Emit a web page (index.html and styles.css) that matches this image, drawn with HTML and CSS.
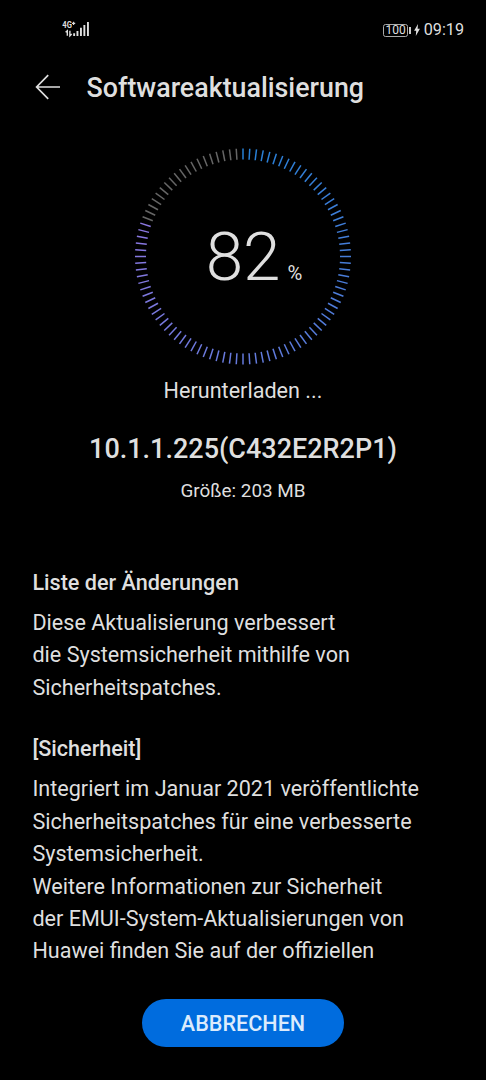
FILE: index.html
```html
<!DOCTYPE html>
<html lang="de">
<head>
<meta charset="utf-8">
<title>Softwareaktualisierung</title>
<link rel="stylesheet" href="styles.css">
</head>
<body>
<div class="screen">
  <header class="status">
    <svg class="signal" width="28" height="18" viewBox="0 0 28 18">
      <text class="network" x="0.3" y="8.4" textLength="9.6" lengthAdjust="spacingAndGlyphs">4G</text>
      <path class="plus" d="M10 3.4h3.2M11.6 1.8V5"/>
      <path class="stroke" d="M5.3 15.8v-5l-1.7 1.4M7.9 10.8v5l1.8-1.8"/>
      <path class="bars" d="M11.2 13.3h1.9v2.7h-1.9zM14.5 11h1.9v5h-1.9zM18 7.8h1.9V16H18zM21.4 5h1.9v11h-1.9zM25 2h1.9v14H25z"/>
    </svg>
    <div class="status-right">
      <span class="battery">100</span>
      <i class="battery-tip"></i>
      <svg class="bolt" width="6" height="12" viewBox="0 0 6 12"><path d="M4 0 .1 6.8h2.1L1.8 12l4.1-7.2H3.6z"/></svg>
      <span class="time">09:19</span>
    </div>
  </header>

  <nav class="titlebar">
    <svg class="back" width="26" height="26" viewBox="0 0 26 26"><path d="M13.2 1.2 1.6 13l11.6 11.8M1.6 13H25"/></svg>
    <h1>Softwareaktualisierung</h1>
  </nav>

  <section class="progress">
    <div class="dial">
      <svg class="ticks" id="ticks" width="220" height="220" viewBox="-110 -110.5 220 220"></svg>
      <div class="percent"><span class="value">82</span><span class="unit">%</span></div>
    </div>
    <p class="state">Herunterladen ...</p>
    <h2 class="version">10.1.1.225(C432E2R2P1)</h2>
    <p class="size">Größe: 203 MB</p>
  </section>

  <main class="changes">
    <h3>Liste der Änderungen</h3>
    <p>Diese Aktualisierung verbessert<br>die Systemsicherheit mithilfe von<br>Sicherheitspatches.</p>
    <h3>[Sicherheit]</h3>
    <p>Integriert im Januar 2021 veröffentlichte<br>Sicherheitspatches für eine verbesserte<br>Systemsicherheit.<br>Weitere Informationen zur Sicherheit<br>der EMUI-System-Aktualisierungen von<br>Huawei finden Sie auf der offiziellen</p>
  </main>

  <footer class="actions"><button class="cancel">ABBRECHEN</button></footer>
</div>
<script src="dial.js"></script>
</body>
</html>
```
FILE: styles.css
```css
* { box-sizing: border-box; margin: 0; padding: 0; }
body { background: #000; }
.screen {
  width: 486px;
  height: 1080px;
  overflow: hidden;
  display: flex;
  flex-direction: column;
  background: #000;
  color: #dfdfdf;
  font-family: Roboto, "Liberation Sans", sans-serif;
  font-size: 21.6px;
  line-height: 32.4px;
}
.status {
  height: 56px;
  padding: 20px 22px 0 62px;
  display: flex;
  justify-content: space-between;
  align-items: flex-start;
}
.network { font-size: 9px; font-weight: 700; fill: #dfdfdf; }
.plus { stroke: #dfdfdf; stroke-width: 1.1; }
.stroke { fill: none; stroke: #dfdfdf; stroke-width: 1.4; }
.bars { fill: #dfdfdf; }
.status-right { display: flex; align-items: center; height: 20px; }
.battery {
  width: 25px;
  height: 13px;
  border: 1px solid #aaa;
  border-radius: 2.5px;
  font-size: 12px;
  line-height: 11px;
  text-align: center;
}
.battery-tip { width: 2px; height: 7px; margin-left: 1px; background: #ccc; }
.bolt { margin-left: 2.5px; fill: #dfdfdf; }
.time { margin-left: 4px; font-size: 16.2px; line-height: 20px; }
.titlebar { height: 64px; padding-left: 35px; display: flex; align-items: center; }
.back { margin-bottom: 3px; fill: none; stroke: #dfdfdf; stroke-width: 1.7; }
h1 { margin-left: 25.5px; font-size: 26.8px; font-weight: 500; }
.progress { height: 446.6px; padding-top: 26px; text-align: center; }
.dial { width: 220px; height: 220px; margin: 0 auto; display: grid; place-items: center; }
.ticks, .percent { grid-area: 1 / 1; }
.ticks { stroke-width: 1.5; }
.percent { display: flex; align-items: baseline; padding: 1px 0 0 22px; }
.value { font-size: 67.5px; line-height: 80px; font-weight: 300; }
.unit { margin-left: 7px; font-size: 20.25px; }
.state { margin-top: 9px; }
.version { margin-top: 26px; font-size: 27px; font-weight: 500; }
.size { margin-top: 9px; font-size: 18.9px; }
.changes { height: 412.4px; }
.changes h3 { padding: 0 32.4px; font-size: 21.6px; font-weight: 500; }
.changes p { padding: 8px 32.4px 28.8px; }
.actions { padding-top: 20px; display: flex; justify-content: center; }
.cancel {
  width: 202px;
  height: 48.5px;
  border: 0;
  border-radius: 25px;
  background: #006cde;
  color: #dcebfc;
  font: 500 21.6px/49px Roboto, "Liberation Sans", sans-serif;
}
```
FILE: dial.js
```js
// Progress dial: 100 radial ticks, clockwise from the top.
const TICKS = 100;
const ACTIVE = 81;
const START = [38, 128, 214];
const END = [139, 119, 224];
const dial = document.getElementById("ticks");
for (let i = 0; i < TICKS; i++) {
  const t = i / (ACTIVE - 1);
  const line = document.createElementNS("http://www.w3.org/2000/svg", "line");
  line.setAttribute("y1", -97);
  line.setAttribute("y2", -108);
  line.setAttribute("transform", `rotate(${i * 360 / TICKS})`);
  const rgb = START.map((c, k) => Math.round(c + (END[k] - c) * t));
  line.setAttribute("stroke", i < ACTIVE ? `rgb(${rgb})` : "#666");
  dial.appendChild(line);
}
```
